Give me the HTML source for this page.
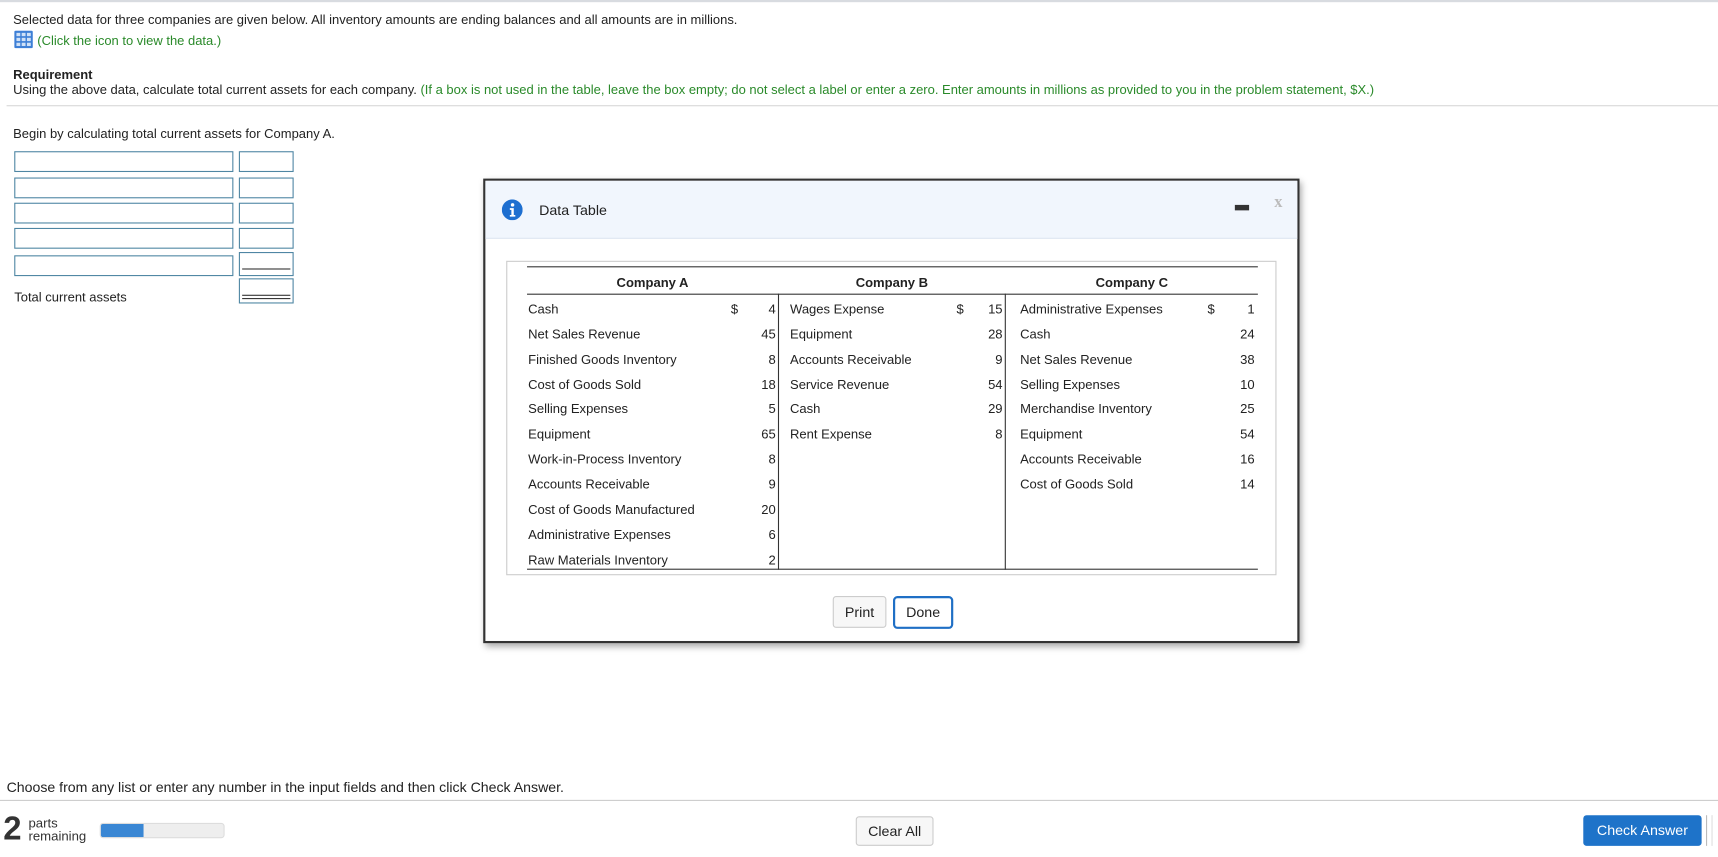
<!DOCTYPE html>
<html><head><meta charset="utf-8"><style>
html,body{margin:0;padding:0;width:1718px;height:857px;overflow:hidden;background:#fff}
#w{position:absolute;left:0;top:0;width:1568px;height:782px;transform:scale(1.0957);transform-origin:0 0;font-family:"Liberation Sans",Arial,sans-serif;color:#222;font-size:11.85px}
.a{position:absolute;white-space:nowrap}
.g{color:#2a8a2a}
.box{position:absolute;border:1px solid #4e86a3;box-sizing:border-box;background:#fff}
.hr{position:absolute;height:1px;background:#d6d6d6}
.t{position:absolute;font-size:11.9px;white-space:nowrap}
.r{text-align:right}
.btn{position:absolute;box-sizing:border-box;border:1px solid #ccc;border-radius:3px;background:#f7f7f7;font-size:13px;text-align:center}
</style></head><body><div id="w">
<div class="hr" style="left:0;top:0;width:1568px;background:#d8dbe0;height:2px"></div>
<div class="a" style="left:12px;top:11px">Selected data for three companies are given below. All inventory amounts are ending balances and all amounts are in millions.</div>
<svg class="a" style="left:13px;top:28px" width="17" height="16" viewBox="0 0 17 16"><rect x="0" y="0" width="17" height="16" rx="1.5" fill="#3d7fd6"/><g fill="#cfe1f7"><rect x="2" y="2" width="3.5" height="3"/><rect x="6.8" y="2" width="3.5" height="3"/><rect x="11.6" y="2" width="3.5" height="3"/><rect x="2" y="6.5" width="3.5" height="3"/><rect x="6.8" y="6.5" width="3.5" height="3"/><rect x="11.6" y="6.5" width="3.5" height="3"/><rect x="2" y="11" width="3.5" height="3"/><rect x="6.8" y="11" width="3.5" height="3"/><rect x="11.6" y="11" width="3.5" height="3"/></g></svg>
<div class="a g" style="left:34px;top:30px">(Click the icon to view the data.)</div>
<div class="a" style="left:12px;top:61px;font-weight:bold">Requirement</div>
<div class="a" style="left:12px;top:75px">Using the above data, calculate total current assets for each company. <span class="g">(If a box is not used in the table, leave the box empty; do not select a label or enter a zero. Enter amounts in millions as provided to you in the problem statement, $X.)</span></div>
<div class="hr" style="left:6px;top:96px;width:1562px"></div>
<div class="a" style="left:12px;top:115px">Begin by calculating total current assets for Company A.</div>

<div class="box" style="left:13px;top:138px;width:200px;height:19px"></div><div class="box" style="left:218px;top:138px;width:50px;height:19px"></div>
<div class="box" style="left:13px;top:162px;width:200px;height:19px"></div><div class="box" style="left:218px;top:162px;width:50px;height:19px"></div>
<div class="box" style="left:13px;top:185px;width:200px;height:19px"></div><div class="box" style="left:218px;top:185px;width:50px;height:19px"></div>
<div class="box" style="left:13px;top:208px;width:200px;height:19px"></div><div class="box" style="left:218px;top:208px;width:50px;height:19px"></div>
<div class="box" style="left:13px;top:233px;width:200px;height:19px"></div><div class="box" style="left:218px;top:230px;width:50px;height:22px"></div>
<div class="a" style="left:221px;top:245px;width:44px;height:1px;background:#333"></div>
<div class="a" style="left:13px;top:264px">Total current assets</div>
<div class="box" style="left:218px;top:254px;width:50px;height:23px"></div>
<div class="a" style="left:221px;top:269px;width:44px;height:1px;background:#333"></div>
<div class="a" style="left:221px;top:272px;width:44px;height:1px;background:#333"></div>

<div class="a" style="left:441px;top:163px;width:745px;height:424px;box-sizing:border-box;border:2px solid #333;background:#fff;box-shadow:2px 3px 6px rgba(0,0,0,.35)"></div>
<div class="a" style="left:443px;top:165px;width:741px;height:52px;background:#f1f6fd;border-bottom:1px solid #dfe7f1"></div>
<svg class="a" style="left:458px;top:182px" width="19" height="19" viewBox="0 0 19 19"><circle cx="9.5" cy="9.5" r="9.5" fill="#1e6fd0"/><circle cx="9.8" cy="5" r="1.6" fill="#fff"/><path d="M7.3 8h3.6v6.2h1.4v1.5H7.3v-1.5h1.4V9.5H7.3z" fill="#fff"/></svg>
<div class="a" style="left:492px;top:184px;font-size:13px">Data Table</div>
<div class="a" style="left:1127px;top:187px;width:13px;height:5px;background:#333"></div>
<div class="a" style="left:1163px;top:177px;color:#bbb;font-size:15px;font-weight:bold;font-family:'Liberation Serif',serif">x</div>

<div class="a" style="left:462px;top:238px;width:703px;height:287px;box-sizing:border-box;border:1px solid #ccc"></div>
<div class="a" style="left:481px;top:243px;width:667px;height:1px;background:#333"></div>
<div class="a" style="left:481px;top:268px;width:667px;height:1px;background:#333"></div>
<div class="a" style="left:481px;top:519px;width:667px;height:1px;background:#333"></div>
<div class="a" style="left:710px;top:268px;width:1px;height:252px;background:#333"></div>
<div class="a" style="left:917px;top:268px;width:1px;height:252px;background:#333"></div>
<div class="t" style="left:481px;top:251px;width:229px;text-align:center;font-weight:bold">Company A</div>
<div class="t" style="left:711px;top:251px;width:206px;text-align:center;font-weight:bold">Company B</div>
<div class="t" style="left:918px;top:251px;width:230px;text-align:center;font-weight:bold">Company C</div>
<div id="rows"></div>
<div class="btn" style="left:760px;top:544px;width:49px;height:29px;line-height:27px">Print</div>
<div class="btn" style="left:815px;top:544px;width:55px;height:30px;line-height:26px;border:2px solid #1f6fc5;border-radius:4px;background:#fff">Done</div>

<div class="a" style="left:6px;top:711px;font-size:12.9px">Choose from any list or enter any number in the input fields and then click Check Answer.</div>
<div class="hr" style="left:0;top:730px;width:1568px;background:#ccc"></div>
<div class="a" style="left:3px;top:740px;font-size:30px;font-weight:bold;color:#333">2</div>
<div class="a" style="left:26px;top:745px;font-size:12px;line-height:12px;color:#333">parts<br>remaining</div>
<div class="a" style="left:91px;top:751px;width:114px;height:14px;border-radius:3px;background:#eee;border:1px solid #ddd;box-sizing:border-box;overflow:hidden"><div style="width:39px;height:100%;background:#3a87d4"></div></div>
<div class="btn" style="left:781px;top:745px;width:71px;height:27px;line-height:25px">Clear All</div>
<div class="a" style="left:1445px;top:744px;width:108px;height:28px;background:#1e73c9;border-radius:3px;color:#fff;font-size:13px;text-align:center;line-height:28px">Check Answer</div>
<div class="a" style="left:1557px;top:744px;width:1px;height:28px;background:#bbb"></div>
<div class="a" style="left:1562px;top:744px;width:1px;height:28px;background:#ddd"></div>
</div>
<script>
var A=[["Cash","$","4"],["Net Sales Revenue","","45"],["Finished Goods Inventory","","8"],["Cost of Goods Sold","","18"],["Selling Expenses","","5"],["Equipment","","65"],["Work-in-Process Inventory","","8"],["Accounts Receivable","","9"],["Cost of Goods Manufactured","","20"],["Administrative Expenses","","6"],["Raw Materials Inventory","","2"]];
var B=[["Wages Expense","$","15"],["Equipment","","28"],["Accounts Receivable","","9"],["Service Revenue","","54"],["Cash","","29"],["Rent Expense","","8"]];
var C=[["Administrative Expenses","$","1"],["Cash","","24"],["Net Sales Revenue","","38"],["Selling Expenses","","10"],["Merchandise Inventory","","25"],["Equipment","","54"],["Accounts Receivable","","16"],["Cost of Goods Sold","","14"]];
var h="";
function col(d,lx,dx,rx){d.forEach(function(r,i){var y=275+i*22.85;
h+='<div class="t" style="left:'+lx+'px;top:'+y+'px">'+r[0]+'</div>';
if(r[1])h+='<div class="t" style="left:'+dx+'px;top:'+y+'px">$</div>';
h+='<div class="t r" style="left:'+(rx-40)+'px;width:40px;top:'+y+'px">'+r[2]+'</div>';});}
col(A,482,667,708);col(B,721,873,915);col(C,931,1102,1145);
document.getElementById("rows").outerHTML=h;
</script>
</body></html>
